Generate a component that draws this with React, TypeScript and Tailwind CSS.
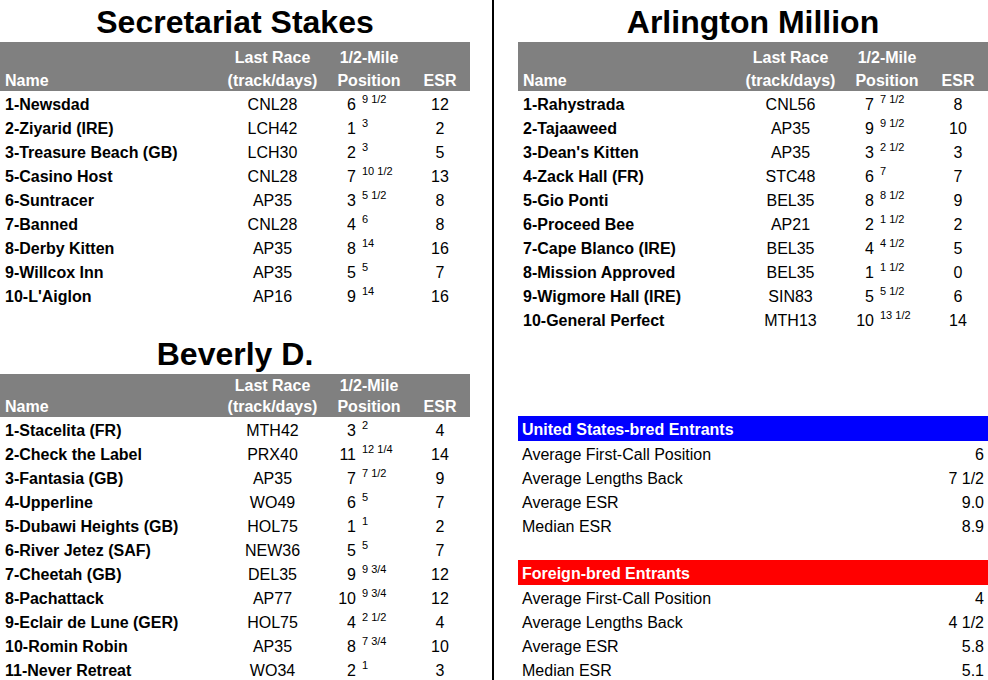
type Row = [string, string, string, string, string];

const secretariat: Row[] = [
  ["1-Newsdad", "CNL28", "6", "9 1/2", "12"],
  ["2-Ziyarid (IRE)", "LCH42", "1", "3", "2"],
  ["3-Treasure Beach (GB)", "LCH30", "2", "3", "5"],
  ["5-Casino Host", "CNL28", "7", "10 1/2", "13"],
  ["6-Suntracer", "AP35", "3", "5 1/2", "8"],
  ["7-Banned", "CNL28", "4", "6", "8"],
  ["8-Derby Kitten", "AP35", "8", "14", "16"],
  ["9-Willcox Inn", "AP35", "5", "5", "7"],
  ["10-L'Aiglon", "AP16", "9", "14", "16"],
];

const beverly: Row[] = [
  ["1-Stacelita (FR)", "MTH42", "3", "2", "4"],
  ["2-Check the Label", "PRX40", "11", "12 1/4", "14"],
  ["3-Fantasia (GB)", "AP35", "7", "7 1/2", "9"],
  ["4-Upperline", "WO49", "6", "5", "7"],
  ["5-Dubawi Heights (GB)", "HOL75", "1", "1", "2"],
  ["6-River Jetez (SAF)", "NEW36", "5", "5", "7"],
  ["7-Cheetah (GB)", "DEL35", "9", "9 3/4", "12"],
  ["8-Pachattack", "AP77", "10", "9 3/4", "12"],
  ["9-Eclair de Lune (GER)", "HOL75", "4", "2 1/2", "4"],
  ["10-Romin Robin", "AP35", "8", "7 3/4", "10"],
  ["11-Never Retreat", "WO34", "2", "1", "3"],
];

const arlington: Row[] = [
  ["1-Rahystrada", "CNL56", "7", "7 1/2", "8"],
  ["2-Tajaaweed", "AP35", "9", "9 1/2", "10"],
  ["3-Dean's Kitten", "AP35", "3", "2 1/2", "3"],
  ["4-Zack Hall (FR)", "STC48", "6", "7", "7"],
  ["5-Gio Ponti", "BEL35", "8", "8 1/2", "9"],
  ["6-Proceed Bee", "AP21", "2", "1 1/2", "2"],
  ["7-Cape Blanco (IRE)", "BEL35", "4", "4 1/2", "5"],
  ["8-Mission Approved", "BEL35", "1", "1 1/2", "0"],
  ["9-Wigmore Hall (IRE)", "SIN83", "5", "5 1/2", "6"],
  ["10-General Perfect", "MTH13", "10", "13 1/2", "14"],
];

const usBred = [
  ["Average First-Call Position", "6"],
  ["Average Lengths Back", "7 1/2"],
  ["Average ESR", "9.0"],
  ["Median ESR", "8.9"],
];

const foreignBred = [
  ["Average First-Call Position", "4"],
  ["Average Lengths Back", "4 1/2"],
  ["Average ESR", "5.8"],
  ["Median ESR", "5.1"],
];

const cols = "grid grid-cols-[226px_93px_100px_42px]";

function Title({ children }: { children: string }) {
  return <h1 className="h-[42px] pt-[1px] text-center text-[32px] font-bold leading-[42px]">{children}</h1>;
}

function RaceTable({ title, rows, tall }: { title: string; rows: Row[]; tall?: boolean }) {
  const cell = tall ? "-mb-[1px]" : "";
  return (
    <div>
      <Title>{title}</Title>
      <div
        className={`${cols} items-end bg-[#808080] font-bold text-white ${
          tall ? "h-[49px] leading-[23px]" : "h-[43px] leading-[21px]"
        }`}
      >
        <div className={`pl-[5px] ${cell}`}>Name</div>
        <div className={`text-center ${cell}`}>
          Last Race
          <br />
          (track/days)
        </div>
        <div className={`text-center ${cell}`}>
          1/2-Mile
          <br />
          Position
        </div>
        <div className={`text-center ${cell}`}>ESR</div>
      </div>
      <div className="mt-[1px]">
        {rows.map(([name, last, pos, back, esr]) => (
          <div key={name} className={`${cols} h-[24px] pt-[1px] leading-[24px]`}>
            <div className="pl-[5px] font-bold whitespace-nowrap">{name}</div>
            <div className="text-center">{last}</div>
            <div className="flex items-start">
              <span className="w-[37px] text-right">{pos}</span>
              <span className="mt-[1px] pl-[6px] text-[11px] leading-[11px] whitespace-nowrap">{back}</span>
            </div>
            <div className="text-center">{esr}</div>
          </div>
        ))}
      </div>
    </div>
  );
}

function Summary({ title, color, rows }: { title: string; color: string; rows: string[][] }) {
  return (
    <div>
      <div className={`h-[25px] pl-[4px] pt-[3px] font-bold leading-[22px] text-white ${color}`}>{title}</div>
      <div className="mt-[1px]">
        {rows.map(([label, value]) => (
          <div key={label} className="flex h-[24px] justify-between px-[4px] pt-[1px] leading-[24px]">
            <span>{label}</span>
            <span>{value}</span>
          </div>
        ))}
      </div>
    </div>
  );
}

export default function App() {
  return (
    <div className="flex h-[680px] w-[988px] overflow-hidden bg-white text-[16px] text-black [font-family:'Liberation_Sans',Arial,sans-serif]">
      <div className="w-[470px] shrink-0">
        <RaceTable title="Secretariat Stakes" rows={secretariat} tall />
        <div className="h-[24px]" />
        <RaceTable title="Beverly D." rows={beverly} />
      </div>
      <div className="w-[22px] shrink-0" />
      <div className="w-[2px] shrink-0 bg-black" />
      <div className="w-[24px] shrink-0" />
      <div className="w-[470px] shrink-0">
        <RaceTable title="Arlington Million" rows={arlington} tall />
        <div className="h-[84px]" />
        <Summary title="United States-bred Entrants" color="bg-[#0000ff]" rows={usBred} />
        <div className="h-[22px]" />
        <Summary title="Foreign-bred Entrants" color="bg-[#ff0000]" rows={foreignBred} />
      </div>
    </div>
  );
}
